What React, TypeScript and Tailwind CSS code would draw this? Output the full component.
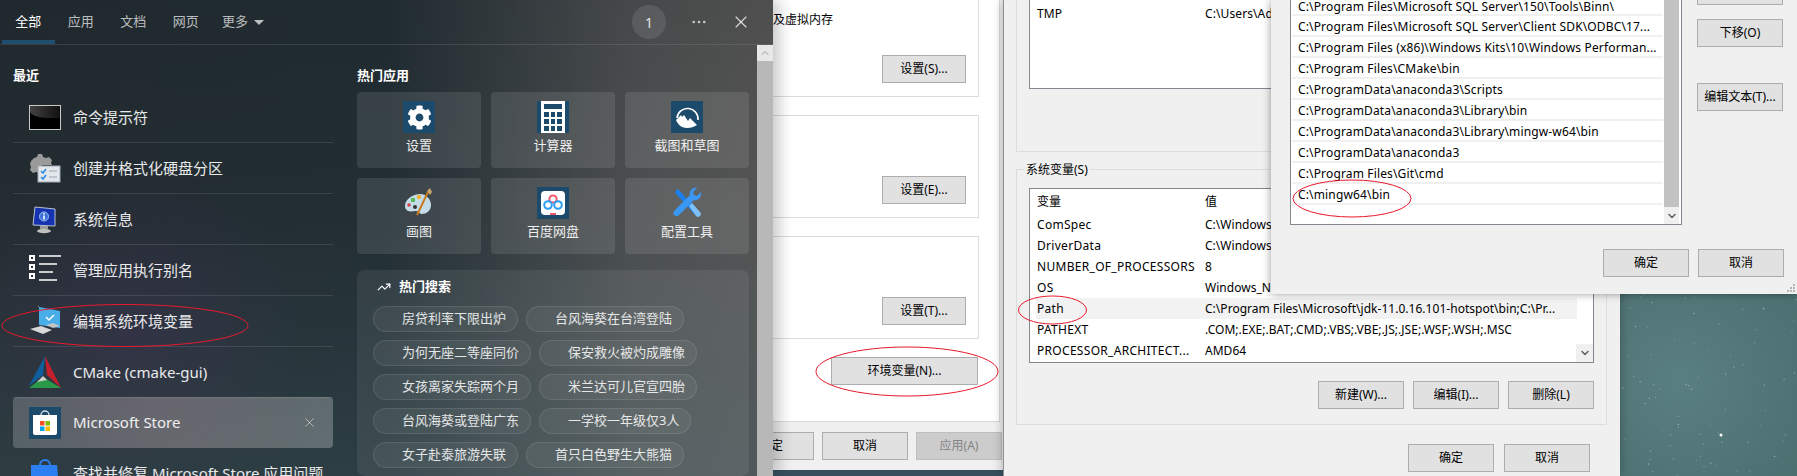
import { ChevronDown, ChevronUp, Ellipsis, TrendingUp, X } from 'lucide-react';
import { FaCog } from 'react-icons/fa';

const TABS = ['全部', '应用', '文档', '网页'];

const HOT_APPS = [
  { label: '设置', icon: <SettingsIcon /> },
  { label: '计算器', icon: <CalcIcon /> },
  { label: '截图和草图', icon: <SnipIcon /> },
  { label: '画图', icon: <PaintIcon /> },
  { label: '百度网盘', icon: <BaiduIcon /> },
  { label: '配置工具', icon: <ToolsIcon /> },
];

const SEARCHES = [
  ['房贷利率下限出炉', '台风海葵在台湾登陆'],
  ['为何无座二等座同价', '保安救火被灼成雕像'],
  ['女孩离家失踪两个月', '米兰达可儿官宣四胎'],
  ['台风海葵或登陆广东', '一学校一年级仅3人'],
  ['女子赴泰旅游失联', '首只白色野生大熊猫'],
];

const SYS_VARS = [
  ['ComSpec', 'C:\\Windows'],
  ['DriverData', 'C:\\Windows'],
  ['NUMBER_OF_PROCESSORS', '8'],
  ['OS', 'Windows_N'],
  ['Path', 'C:\\Program Files\\Microsoft\\jdk-11.0.16.101-hotspot\\bin;C:\\Pr...'],
  ['PATHEXT', '.COM;.EXE;.BAT;.CMD;.VBS;.VBE;.JS;.JSE;.WSF;.WSH;.MSC'],
  ['PROCESSOR_ARCHITECT...', 'AMD64'],
];

const PATHS = [
  'C:\\Program Files\\Microsoft SQL Server\\150\\Tools\\Binn\\',
  'C:\\Program Files\\Microsoft SQL Server\\Client SDK\\ODBC\\17...',
  'C:\\Program Files (x86)\\Windows Kits\\10\\Windows Performan...',
  'C:\\Program Files\\CMake\\bin',
  'C:\\ProgramData\\anaconda3\\Scripts',
  'C:\\ProgramData\\anaconda3\\Library\\bin',
  'C:\\ProgramData\\anaconda3\\Library\\mingw-w64\\bin',
  'C:\\ProgramData\\anaconda3',
  'C:\\Program Files\\Git\\cmd',
  'C:\\mingw64\\bin',
];

// cheap scatter so the wallpaper dots don't line up
const rand = (n: number) => {
  const v = Math.sin(n * 12.9898) * 43758.5453;
  return v - Math.floor(v);
};

const STARS = Array.from({ length: 80 }, (_, i) => ({
  x: rand(i + 1) * 177,
  y: rand(i + 101) * 182,
  o: 0.15 + rand(i + 201) * 0.4,
}));

function SettingsIcon() {
  return (
    <div className="flex h-8 w-8 items-center justify-center bg-[#1b4a6b]">
      <FaCog size={25} color="#fff" />
    </div>
  );
}

function CalcIcon() {
  const keys = Array.from({ length: 9 });
  return (
    <div className="flex h-8 w-8 justify-center bg-[#1b4a6b]">
      <div className="flex w-6 flex-col bg-white px-[3px] pt-[3px]">
        <div className="h-[5px] bg-[#1b4a6b]" />
        <div className="mt-[3px] grid grid-cols-3 gap-x-[2px] gap-y-[2px]">
          {keys.map((_, i) => (
            <div key={i} className="h-[5px] bg-[#1b4a6b]" />
          ))}
        </div>
      </div>
    </div>
  );
}

function SnipIcon() {
  return (
    <svg width="32" height="32" viewBox="0 0 32 32">
      <rect width="32" height="32" fill="#1b4a6b" />
      <path d="M6 17a10 10 0 1 1 21 2" fill="none" stroke="#fff" strokeWidth="1.6" />
      <path d="M5 19l5-5 1 2 2-2 4 6 2-3 7 7c-3 2-6 3-10 3-5 0-9-3-11-8z" fill="#fff" />
    </svg>
  );
}

function PaintIcon() {
  return (
    <svg width="32" height="32" viewBox="0 0 32 32">
      <path d="M2 19c0-7 8-12 15-12 7 0 11 6 11 11 0 6-5 9-9 9-3 0-3-3-6-3-3 0-5 1-8 0-2-1-3-3-3-5z" fill="#c4dcea" />
      <circle cx="6" cy="18" r="1.8" fill="#d84040" />
      <rect x="8" y="11" width="4" height="4" fill="#5cb85c" />
      <circle cx="16" cy="10" r="2.2" fill="#f0b030" />
      <circle cx="12" cy="20" r="2" fill="#333" />
      <path d="M25 5L14 28" stroke="#c87a20" strokeWidth="2" />
      <path d="M24 4l3-3 2 4-2 3z" fill="#c9a46a" />
    </svg>
  );
}

function BaiduIcon() {
  return (
    <svg width="32" height="32" viewBox="0 0 32 32">
      <rect width="32" height="32" fill="#1b4a6b" />
      <rect x="4" y="4" width="24" height="24" rx="4" fill="#fff" />
      <circle cx="16" cy="12" r="3.6" fill="none" stroke="#ef5a6a" strokeWidth="2" />
      <circle cx="11" cy="18" r="3.8" fill="none" stroke="#2a9df4" strokeWidth="2" />
      <circle cx="21" cy="18" r="3.8" fill="none" stroke="#2a9df4" strokeWidth="2" />
      <rect x="13" y="26" width="6" height="2" fill="#ef5a6a" />
    </svg>
  );
}

function ToolsIcon() {
  return (
    <svg width="32" height="32" viewBox="0 0 32 32">
      <path d="M5 3l2-1 3 3 17 20-3 3L7 9 4 6z" fill="#1f7fe8" />
      <path d="M18 19l3-3 8 9a2 2 0 0 1-4 4z" fill="#7cc0f5" />
      <path d="M30 5l-4 4-3-1-1-3 4-4c-4-1-8 2-7 7L4 23c-2 2-2 4-1 5s4 2 6-1l14-14c4 1 8-3 7-8z" fill="#3a97f2" />
    </svg>
  );
}

function CmdIcon() {
  return (
    <div className="mt-[1px] h-[25px] w-8 overflow-hidden border border-[#c8c8c8] bg-black">
      <div className="h-[12px] w-full bg-gradient-to-r from-[#444] to-[#111]" style={{ borderBottomLeftRadius: '60%' }} />
    </div>
  );
}

function DiskIcon() {
  return (
    <svg width="32" height="32" viewBox="0 0 32 32">
      <path d="M5 6l3-1 1-3h4l1 3 3 1 3-1 3 3-1 3 1 2H13v11h-2l-1-3-3-1-3 1-3-3 1-3-1-3 1-3z" fill="#9a9a9a" />
      <rect x="9" y="14" width="22" height="16" fill="#e3e7ec" stroke="#9fa8b2" />
      <path d="M12 19l2 2 3-4M12 25l2 2 3-4" stroke="#2d8be0" strokeWidth="1.6" fill="none" />
      <path d="M20 19h8M20 25h8" stroke="#9aa3ad" />
    </svg>
  );
}

function InfoIcon() {
  return (
    <svg width="32" height="32" viewBox="0 0 32 32">
      <path d="M6 4l20 2v17l-22-1z" fill="#1533b0" stroke="#b9c3d2" />
      <circle cx="15" cy="13.5" r="4.5" fill="#3c70d8" stroke="#9fc0ef" />
      <rect x="14.2" y="12.5" width="1.6" height="4" fill="#fff" />
      <rect x="14.2" y="10.2" width="1.6" height="1.4" fill="#fff" />
      <path d="M11 23h8v3h-8z" fill="#9b9b9b" />
      <ellipse cx="15" cy="28" rx="7" ry="2.2" fill="#c0c0c0" />
    </svg>
  );
}

function ListIcon() {
  return (
    <svg width="32" height="32" viewBox="0 0 32 32">
      {[1, 10, 19].map(y => (
        <path key={y} fillRule="evenodd" d={`M0 ${y}h6v6h-6zM2 ${y + 2}v2h2v-2z`} fill="#fff" />
      ))}
      <path d="M10 2h22M10 10h18M10 18h14M10 26h18" stroke="#fff" strokeWidth="1.6" />
    </svg>
  );
}

function ComputerIcon() {
  return (
    <svg width="32" height="32" viewBox="0 0 32 32">
      <path d="M10 2l21 4v17l-21-3z" fill="#49aee8" />
      <path d="M17 12l3 3 5-5" stroke="#fff" strokeWidth="1.5" fill="none" />
      <path d="M9 1l1 1" stroke="#999" />
      <path d="M1 24l11-3 11 4-9 4z" fill="#d8d8d8" />
      <path d="M17 20l7-2 7 3-7 2z" fill="#c4c4c4" />
    </svg>
  );
}

function CMakeIcon() {
  return (
    <svg width="32" height="32" viewBox="0 0 32 32">
      <path d="M16 0L0 30l14-11z" fill="#0f5f9e" />
      <path d="M16 0l16 32-14-13z" fill="#c3202c" />
      <path d="M0 32l14-11 18 11z" fill="#2a9a4a" />
      <path d="M8 26l6-6 4 4z" fill="#d0d0d0" />
    </svg>
  );
}

function StoreIcon() {
  return (
    <svg width="32" height="32" viewBox="0 0 32 32">
      <rect width="32" height="32" fill="#1b4a6b" />
      <path d="M12 8a4 4 0 0 1 8 0" stroke="#cfd8df" strokeWidth="1.4" fill="none" />
      <path d="M4 8h24v18a2 2 0 0 1-2 2H6a2 2 0 0 1-2-2z" fill="#fff" />
      <rect x="11" y="14" width="4.5" height="4.5" fill="#f25022" />
      <rect x="16.5" y="14" width="4.5" height="4.5" fill="#7fba00" />
      <rect x="11" y="19.5" width="4.5" height="4.5" fill="#00a4ef" />
      <rect x="16.5" y="19.5" width="4.5" height="4.5" fill="#ffb900" />
    </svg>
  );
}

function RepairIcon() {
  return (
    <svg width="32" height="32" viewBox="0 0 32 32">
      <path d="M11 7a5 5 0 0 1 10 0" stroke="#2b7ff0" strokeWidth="2" fill="none" />
      <path d="M2 7h26l2 23H2z" fill="#2b7ff0" />
    </svg>
  );
}

const RECENT = [
  { label: '命令提示符', icon: <CmdIcon /> },
  { label: '创建并格式化硬盘分区', icon: <DiskIcon /> },
  { label: '系统信息', icon: <InfoIcon /> },
  { label: '管理应用执行别名', icon: <ListIcon /> },
  { label: '编辑系统环境变量', icon: <ComputerIcon /> },
  { label: 'CMake (cmake-gui)', icon: <CMakeIcon /> },
];

function Button({ children, className = '', disabled = false }: { children?: string; className?: string; disabled?: boolean }) {
  return (
    <div
      className={`flex h-7 shrink-0 items-center justify-center border text-[12px] ${
        disabled ? 'border-[#bfbfbf] bg-[#cccccc] text-[#838383]' : 'border-[#adadad] bg-[#e1e1e1] text-black'
      } ${className || 'w-[86px]'}`}
    >
      {children}
    </div>
  );
}

function StartPanel() {
  return (
    <div className="absolute left-0 top-0 z-30 h-[476px] w-[773px] overflow-hidden bg-[radial-gradient(circle_at_130px_330px,rgba(70,50,90,0.35),transparent_170px),linear-gradient(to_bottom,rgba(0,0,0,0.08),transparent_45%,rgba(70,100,105,0.3)),linear-gradient(to_right,#232c31,#222e34_50%,#4c4f50_82%,#555555)] text-white shadow-[6px_0_14px_rgba(0,0,0,0.22)]">
      <div className="flex h-[45px] items-center border-b border-white/10 pr-[22px]">
        <div className="flex h-full">
          {TABS.map((t, i) => (
            <div
              key={t}
              className={`flex h-full w-[52.5px] items-center justify-center border-b-4 pt-[3px] text-[13px] ${
                i === 0 ? 'ml-[2px] w-[50px] border-[#1f4f6f] text-white' : 'border-transparent text-white/70'
              }`}
            >
              {t}
            </div>
          ))}
          <div className="ml-[10px] flex items-center gap-[6px] text-[13px] text-white/70">
            更多
            <div className="h-0 w-0 border-x-[5px] border-t-[5px] border-x-transparent border-t-white/70" />
          </div>
        </div>
        <div className="ml-auto flex h-[34px] w-[34px] items-center justify-center rounded-full bg-white/10 text-[14px] text-white/85">1</div>
        <Ellipsis size={18} strokeWidth={1.4} className="ml-[24px] text-white/75" />
        <X size={20} strokeWidth={1.3} className="ml-[23px] text-white/80" />
      </div>

      <div className="flex h-[431px]">
        <div className="ml-[13px] w-[320px] shrink-0 pt-[20px]">
          <div className="h-5 text-[13px] font-bold leading-5">最近</div>
          <div className="mt-[7px] flex flex-col">
            {RECENT.map(r => (
              <div key={r.label} className="flex h-[51px] items-center border-b border-white/10 pl-4 text-[15px] text-white/90">
                <div className="flex h-8 w-8 items-center justify-center">{r.icon}</div>
                <span className="ml-3">{r.label}</span>
              </div>
            ))}
            <div className="-mt-px flex h-[51px] items-center rounded bg-[linear-gradient(to_right,rgba(255,255,255,0.2),rgba(255,225,225,0.27)_45%,rgba(255,255,255,0.25))] pl-4 pr-4 text-[15px] text-white/90">
              <StoreIcon />
              <span className="ml-3">Microsoft Store</span>
              <X size={15} strokeWidth={1.4} className="ml-auto text-white/60" />
            </div>
            <div className="flex h-[51px] items-center pl-4 text-[15px] text-white/90">
              <RepairIcon />
              <span className="ml-3 whitespace-nowrap">查找并修复 Microsoft Store 应用问题</span>
            </div>
          </div>
        </div>

        <div className="ml-6 w-[392px] shrink-0 pt-[20px]">
          <div className="h-5 text-[13px] font-bold leading-5">热门应用</div>
          <div className="mt-[7px] grid grid-cols-3 gap-[10px]">
            {HOT_APPS.map(a => (
              <div key={a.label} className="flex h-[76px] flex-col items-center rounded bg-white/10 pt-[9px] text-[13px] text-white/90">
                {a.icon}
                <span className="mt-[2px] leading-5">{a.label}</span>
              </div>
            ))}
          </div>
          <div className="mt-4 h-[206px] rounded-lg bg-white/[0.07] pl-4 pt-2">
            <div className="flex h-[18px] items-center pl-1 text-[13px] font-bold">
              <TrendingUp size={14} strokeWidth={2} />
              <span className="ml-2">热门搜索</span>
            </div>
            <div className="mt-[10px] flex flex-col gap-2">
              {SEARCHES.map(pair => (
                <div key={pair[0]} className="flex gap-2">
                  {pair.map(s => (
                    <div key={s} className="flex h-[26px] items-center rounded-full border border-white/10 bg-white/[0.05] pl-[28px] pr-[11px] text-[13px] text-white/85">
                      {s}
                    </div>
                  ))}
                </div>
              ))}
            </div>
          </div>
        </div>

        <div className="ml-2 flex w-4 flex-col">
          <div className="flex h-4 shrink-0 items-center justify-center bg-[#e8e8e8]">
            <ChevronUp size={12} className="text-[#9a9a9a]" />
          </div>
          <div className="flex-1 bg-[#b8b8b8]" />
        </div>
      </div>
    </div>
  );
}

function SystemProperties() {
  return (
    <div className="absolute left-[700px] top-0 z-10 flex h-[470px] w-[303px] flex-col bg-[#f0f0f0]">
      <div className="mr-[3px] flex h-[422px] flex-col gap-[18px] border-b border-r border-[#d9d9d9] bg-white pr-5">
        <div className="flex h-[97px] flex-col border-x border-b border-[#dcdcdc]">
          <div className="pl-[72px] pt-[12px] text-[12px] leading-4 text-black">及虚拟内存</div>
          <div className="mt-auto flex justify-end pb-[13px] pr-3">
            <Button className="w-[84px]">设置(S)...</Button>
          </div>
        </div>
        <div className="flex h-[103px] items-end justify-end border border-[#dcdcdc] pb-[13px] pr-3">
          <Button className="w-[84px]">设置(E)...</Button>
        </div>
        <div className="flex h-[103px] items-end justify-end border border-[#dcdcdc] pb-[13px] pr-3">
          <Button className="w-[84px]">设置(T)...</Button>
        </div>
        <div className="flex justify-end pr-px">
          <Button className="w-[147px]">环境变量(N)...</Button>
        </div>
      </div>
      <div className="mt-[10px] flex justify-end gap-2 pr-px">
        <Button>确定</Button>
        <Button>取消</Button>
        <Button disabled>应用(A)</Button>
      </div>
    </div>
  );
}

function EnvVariables() {
  return (
    <div className="absolute left-[1003px] top-0 z-20 flex h-[476px] w-[617px] flex-col border-l border-[#8f8f8f] bg-[#f0f0f0] pl-3 pr-[13px] shadow-[0_0_10px_rgba(0,0,0,0.3)]">
      <div className="h-[152px] shrink-0 border-x border-b border-[#dcdcdc] px-3">
        <div className="h-[89px] border border-t-0 border-[#828790] bg-white">
          <div className="flex h-[21px] items-center pl-[7px] pt-[6px] text-[12px] tracking-[0.1px] text-black">
            <span className="w-[168px]">TMP</span>
            <span>C:\Users\Ad</span>
          </div>
        </div>
      </div>
      <div className="relative mt-[17px] flex h-[256px] shrink-0 flex-col border border-[#dcdcdc] px-3 pt-[18px]">
        <div className="absolute -top-[10px] left-[7px] bg-[#f0f0f0] px-[2px] text-[12px] leading-5 text-black">系统变量(S)</div>
        <div className="relative h-[175px] shrink-0 border border-[#828790] bg-white">
          <div className="flex h-[25px] items-center pl-[7px] text-[12px] text-black">
            <span className="w-[168px]">变量</span>
            <span>值</span>
          </div>
          {SYS_VARS.map(([name, value]) => (
            <div
              key={name}
              className={`ml-[6px] flex h-[21px] w-[541px] items-center whitespace-nowrap pl-px text-[12px] text-black ${name === 'Path' ? 'bg-[#f2f2f2]' : ''}`}
            >
              <span className="w-[168px] tracking-[0.3px]">{name}</span>
              <span className="tracking-[0.03px]">{value}</span>
            </div>
          ))}
          <div className="absolute bottom-0 right-0 flex h-[18px] w-[17px] items-center justify-center bg-[#f0f0f0]">
            <ChevronDown size={12} strokeWidth={3} className="text-[#606060]" />
          </div>
        </div>
        <div className="mt-[18px] flex justify-end gap-[9px]">
          <Button>新建(W)...</Button>
          <Button>编辑(I)...</Button>
          <Button>删除(L)</Button>
        </div>
      </div>
      <div className="mt-[19px] flex justify-end gap-[10px] pr-[17px]">
        <Button>确定</Button>
        <Button>取消</Button>
      </div>
    </div>
  );
}

function EditPath() {
  return (
    <div className="absolute left-[1271px] top-0 z-20 flex h-[294px] w-[526px] flex-col bg-[#f0f0f0] pl-[19px] shadow-[0_0_8px_rgba(0,0,0,0.4)]">
      <div className="flex h-[225px] shrink-0 gap-[15px]">
        <div className="flex w-[392px] shrink-0 overflow-hidden border border-t-0 border-[#828790] bg-white">
          <div className="w-[372px] shrink-0 pl-px">
            {PATHS.map((p, i) => (
              <div
                key={p}
                className={`flex items-center whitespace-nowrap border-b-2 border-[#f0f0f0] pl-[6px] text-[12px] tracking-[0.15px] text-black ${
                  i === 0 ? 'h-4' : 'h-[21px] pt-[3px]'
                }`}
              >
                {p}
              </div>
            ))}
          </div>
          <div className="ml-px flex w-[15px] flex-col">
            <div className="h-[207px] bg-[#c2c2c2]" />
            <div className="flex flex-1 items-center justify-center bg-[#f0f0f0]">
              <ChevronDown size={12} strokeWidth={3} className="text-[#606060]" />
            </div>
          </div>
        </div>
        <div className="flex flex-col">
          <Button className="-mt-[23px] w-[86px]" />
          <Button className="mt-[14px] w-[86px]">下移(O)</Button>
          <Button className="mt-9 w-[86px]">编辑文本(T)...</Button>
        </div>
      </div>
      <div className="mt-6 flex justify-end gap-[9px] pr-[13px]">
        <Button>确定</Button>
        <Button>取消</Button>
      </div>
      <div className="absolute bottom-[2px] right-[2px] grid grid-cols-3 gap-px">
        {[0, 1, 2, 3, 4, 5, 6, 7, 8].map(i => (
          <div key={i} className={`h-[2px] w-[2px] ${[0, 1, 3].includes(i) ? '' : 'bg-[#b5b5b5]'}`} />
        ))}
      </div>
    </div>
  );
}

export default function App() {
  return (
    <div className="relative h-[476px] w-[1797px] overflow-hidden bg-[radial-gradient(circle_at_1680px_380px,#5a7f80,#456869_220px)] font-['Noto_Sans','Noto_Sans_CJK_SC',sans-serif]">
      <svg className="absolute left-[1620px] top-[294px]" width="177" height="182">
        {STARS.map((s, i) => (
          <circle key={i} cx={s.x} cy={s.y} r="0.6" fill="#fff" opacity={s.o} />
        ))}
        <circle cx="101" cy="141" r="1.5" fill="#fff" />
      </svg>
      <div className="absolute left-[773px] top-[470px] h-[6px] w-[230px] bg-[#35505c]" />

      <SystemProperties />
      <EnvVariables />
      <EditPath />
      <StartPanel />

      <svg className="pointer-events-none absolute left-0 top-0 z-40" width="1797" height="476" fill="none" stroke="#e8192c" strokeWidth="1">
        <ellipse cx="125" cy="325.5" rx="123" ry="21" />
        <ellipse cx="907" cy="371.5" rx="91" ry="24.5" />
        <ellipse cx="1052.5" cy="310" rx="34" ry="14" />
        <ellipse cx="1352" cy="198.5" rx="59" ry="18.5" />
      </svg>
    </div>
  );
}
